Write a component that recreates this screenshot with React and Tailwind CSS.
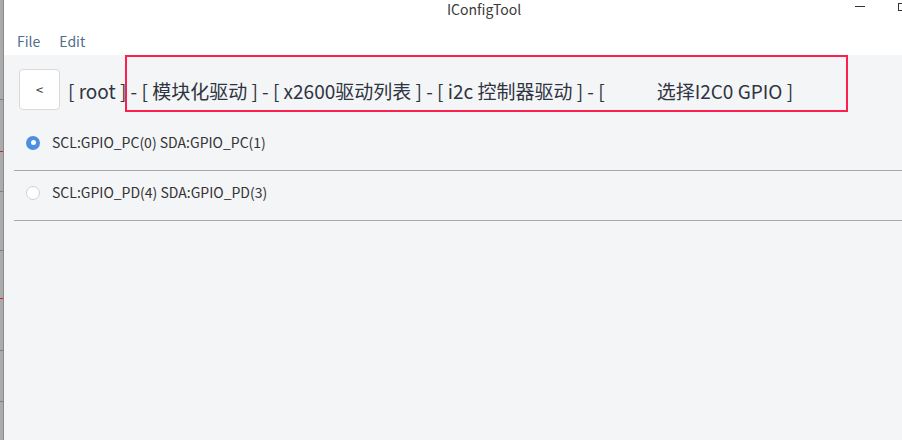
import React from "react";

const crumbs = "[ root ] - [ 模块化驱动 ] - [ x2600驱动列表 ] - [ i2c 控制器驱动 ] - [";

const options = [
  { label: "SCL:GPIO_PC(0) SDA:GPIO_PC(1)", checked: true },
  { label: "SCL:GPIO_PD(4) SDA:GPIO_PD(3)", checked: false },
];

const stripLines = [
  { y: 99, c: "bg-[#7d7d7d]" },
  { y: 151, c: "bg-[#d0203c]" },
  { y: 191, c: "bg-[#7d7d7d]" },
  { y: 250, c: "bg-[#7d7d7d]" },
  { y: 298, c: "bg-[#d0203c]" },
  { y: 350, c: "bg-[#7d7d7d]" },
  { y: 401, c: "bg-[#7d7d7d]" },
];

const Radio = ({ checked }) =>
  checked ? (
    <span className="flex size-[14px] items-center justify-center rounded-full bg-[#4a8fe0]">
      <span className="size-[5px] rounded-full bg-white" />
    </span>
  ) : (
    <span className="size-[14px] rounded-full border border-[#ccd1db] bg-white" />
  );

const App = () => {
  return (
    <div
      className="flex h-[440px] w-[902px] overflow-hidden bg-white text-[#333]"
      style={{ fontFamily: '"Noto Sans CJK SC", "Noto Sans", sans-serif' }}
    >
      {/* window behind, peeking on the left */}
      <div className="flex w-[4px] shrink-0 flex-col border-r border-[#8a8a8a] bg-[#ababab]">
        {stripLines.map((l, i) => (
          <div
            key={i}
            className={`h-[1px] w-full shrink-0 ${l.c}`}
            style={{ marginTop: i === 0 ? l.y : l.y - stripLines[i - 1].y - 1 }}
          />
        ))}
      </div>

      <div className="relative flex min-w-0 flex-1 flex-col overflow-hidden">
        {/* title bar */}
        <div className="flex h-[20px] shrink-0 items-start">
          <span className="ml-[443px] mt-[0px] text-[14px] leading-[18px] text-[#3a3a3a]">
            IConfigTool
          </span>
          <span className="ml-auto mt-[6px] h-[1px] w-[10px] bg-[#333]" />
          <span className="ml-[33px] mr-[-4px] mt-[3px] size-[8px] shrink-0 border border-[#333]" />
        </div>

        {/* menu bar */}
        <div className="flex h-[35px] shrink-0 items-center gap-[19px] pl-[13px] pt-[8px] text-[14px] text-[#4f6d8c]">
          <span>File</span>
          <span>Edit</span>
        </div>

        {/* content */}
        <div className="flex flex-1 flex-col bg-[#f4f5f7]">
          <div className="flex items-center gap-[8px] pl-[15px] pt-[14px]">
            <button
              type="button"
              className="flex size-[41px] items-center justify-center rounded-[4px] border border-[#d9d9d9] bg-white text-[13px] text-[#333]"
            >
              &lt;
            </button>
            <div className="flex items-center whitespace-pre pt-[2px] text-[19px] leading-[24px] text-[#2e3440]">
              <span>{crumbs}</span>
              <span className="w-[52px]" />
              <span>选择I2C0 GPIO ]</span>
            </div>
          </div>

          <div className="ml-[10px] mt-[11px] flex flex-col">
            {options.map((opt, i) => (
              <label
                key={i}
                className="flex h-[50px] items-center gap-[12px] border-b border-[#a8a8a8] pb-[6px] pl-[12px] text-[14px] text-[#333]"
              >
                <Radio checked={opt.checked} />
                <span>{opt.label}</span>
              </label>
            ))}
          </div>
        </div>

        {/* annotation box */}
        <div className="pointer-events-none absolute left-[121px] top-[55px] h-[57px] w-[723px] border-[2px] border-[#ff1f4f]" />
      </div>
    </div>
  );
};

export default App;
